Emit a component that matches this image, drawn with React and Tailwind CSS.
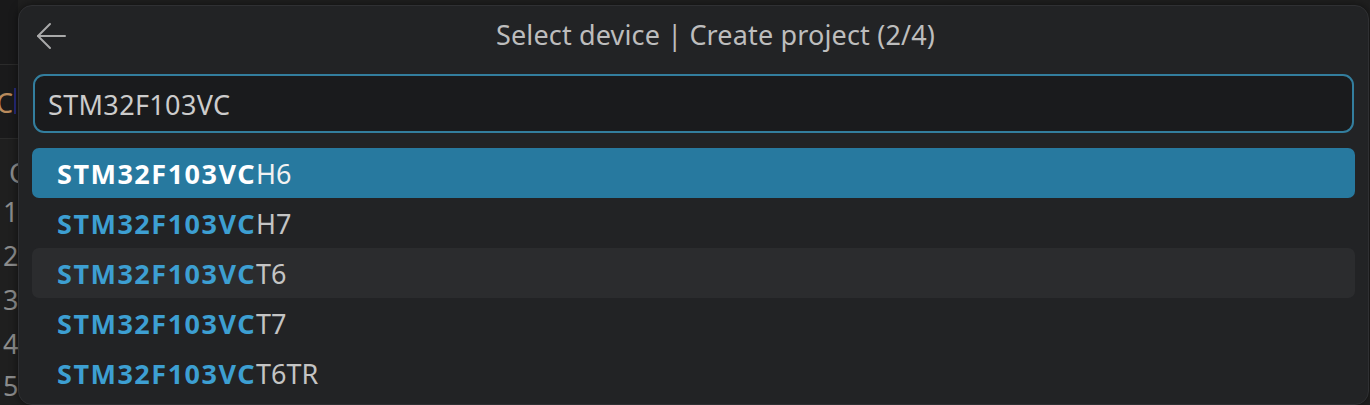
import React from "react";

const items = [
  { match: "STM32F103VC", rest: "H6", selected: true },
  { match: "STM32F103VC", rest: "H7" },
  { match: "STM32F103VC", rest: "T6", hover: true },
  { match: "STM32F103VC", rest: "T7" },
  { match: "STM32F103VC", rest: "T6TR" },
];

const font = { fontFamily: '"Noto Sans", "Open Sans", sans-serif' };

function BackArrow() {
  return (
    <svg width="30" height="30" viewBox="0 0 30 30" fill="none" stroke="#a9a9a9" strokeWidth="2" strokeLinecap="round" strokeLinejoin="round">
      <path d="M2 15H29" />
      <path d="M14 3L2 15L14 27" />
    </svg>
  );
}

function Row({ item }) {
  const bg = item.selected ? "bg-[#27799f]" : item.hover ? "bg-[#2b2c2e]" : "";
  return (
    <div className={`h-[50px] rounded-[7px] flex items-center pl-[25px] pt-[3px] ${bg}`}>
      <span className={`font-bold tracking-[1.5px] ${item.selected ? "text-white" : "text-[#3d9fd2]"}`}>{item.match}</span>
      <span className={item.selected ? "text-[#f2f2f2]" : "text-[#c4c4c4]"}>{item.rest}</span>
    </div>
  );
}

export default function App() {
  return (
    <div className="relative w-[1370px] h-[405px] overflow-hidden bg-[#1f1f1f]" style={font}>
      {/* editor underneath */}
      <div className="flex flex-col w-[18px] h-full">
        <div className="h-[68px] bg-[#19191a] border-b border-[#2b2b2b]" />
        <div className="h-[78px] bg-[#1a1a1b] border-b border-[#2b2b2b] flex items-center text-[27px] leading-none text-[#b98a5c]">
          <span className="-ml-[4px] pt-[2px]">C</span>
          <span className="ml-[1px] w-[2px] h-[26px] bg-[#262a7a]" />
        </div>
        <div className="flex flex-col text-[27px] text-[#8c8c8c] leading-none pt-[6px]">
          <span className="h-[44px] flex items-center pt-[10px] ml-[9px]">C</span>
          <span className="h-[44px] flex items-center pl-[3px]">1</span>
          <span className="h-[44px] flex items-center pl-[3px]">2</span>
          <span className="h-[44px] flex items-center pl-[3px]">3</span>
          <span className="h-[44px] flex items-center pl-[3px]">4</span>
          <span className="h-[40px] flex items-center pl-[3px]">5</span>
        </div>
      </div>

      {/* quick pick */}
      <div className="absolute left-[18px] top-[5px] w-[1351px] h-[400px] rounded-[14px] bg-[#222325] border border-[#2f3033] shadow-[0_0_8px_rgba(0,0,0,0.5)] flex flex-col">
        <div className="flex items-center h-[60px]">
          <div className="w-[62px] flex items-center justify-center pl-[2px]">
            <BackArrow />
          </div>
          <div className="flex-1 text-center text-[27px] text-[#bdbdbd] pr-[18px] -mt-[2px] tracking-[0.15px]">Select device | Create project (2/4)</div>
        </div>
        <div className="mx-[14px] mt-[8px] h-[59px] rounded-[11px] border-2 border-[#337e9e] bg-[#1a1b1d] flex items-center pl-[13px] pt-[3px] text-[27px] text-[#cccccc] tracking-[0.35px]">
          STM32F103VC
        </div>
        <div className="mx-[13px] mt-[15px] flex flex-col text-[27px]">
          {items.map((it, i) => (
            <Row key={i} item={it} />
          ))}
        </div>
      </div>
    </div>
  );
}
